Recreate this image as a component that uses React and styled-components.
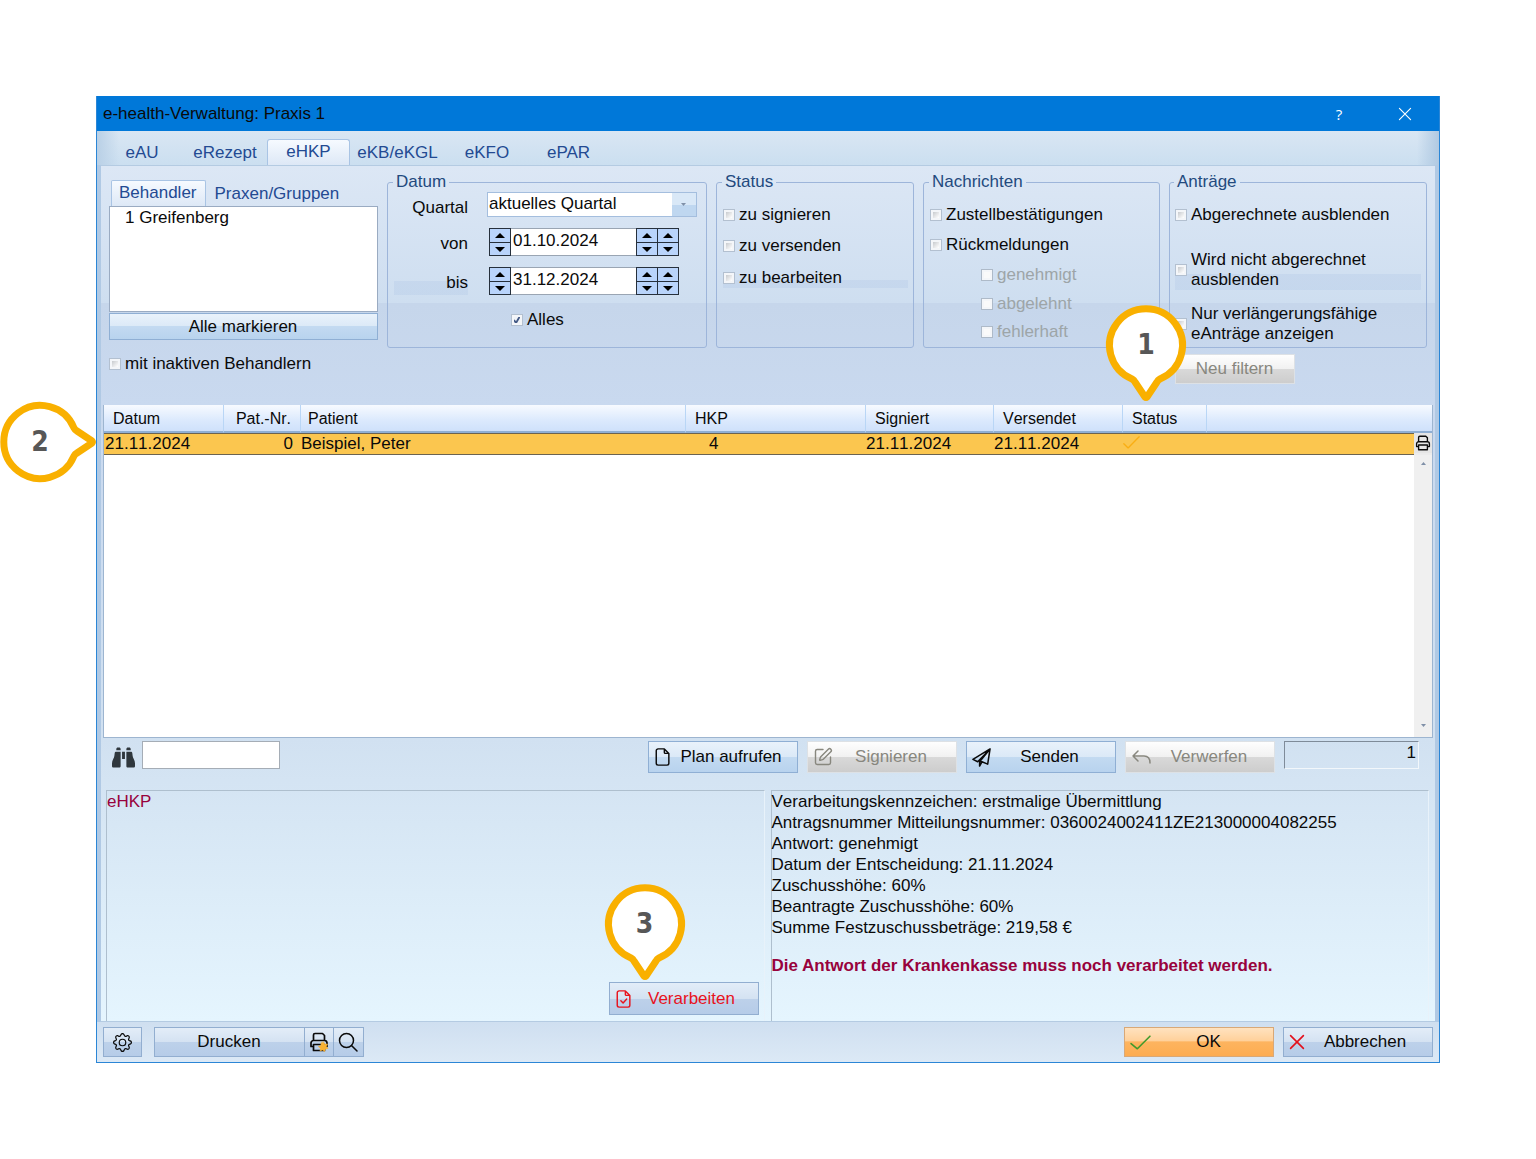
import React, { useState } from 'react';
import styled, { createGlobalStyle, css } from 'styled-components';
import { FaBinoculars } from 'react-icons/fa6';
import { BsGear } from 'react-icons/bs';
import { SquarePen } from 'lucide-react';

const GlobalStyle = createGlobalStyle`
  * {
    box-sizing: border-box;
  }
  body {
    margin: 0;
    background: #fff;
    color: #0a0a0a;
    font-family: 'Liberation Sans', Arial, sans-serif;
    font-size: 17px;
    line-height: 20px;
  }
  button, input, select {
    font: inherit;
    color: inherit;
    margin: 0;
    padding: 0;
  }
`;

const Page = styled.main`
  padding: 96px;
`;

const Window = styled.section`
  display: flex;
  flex-direction: column;
  min-width: 1240px;
  border: 1px solid #2b86d6;
  border-top: 0;
  background: #d3e3f2;
`;

const TitleBar = styled.header`
  display: flex;
  align-items: center;
  height: 35px;
  padding: 0 24px 0 6px;
  background: #0078d9;

  h1 {
    flex: 1;
    margin: 0;
    font-size: 17px;
    font-weight: 400;
  }
`;

const TitleButton = styled.button`
  display: flex;
  align-items: center;
  justify-content: center;
  width: 20px;
  height: 24px;
  margin-left: 46px;
  border: 0;
  background: none;
  color: #fff;
  font-family: 'Open Sans', sans-serif;
  font-size: 15px;
`;

const Tabs = styled.nav`
  display: flex;
  align-items: flex-end;
  height: 34px;
  padding-left: 4px;
  background: linear-gradient(90deg, #b9d0e6 0, rgba(185, 208, 230, 0) 22px calc(100% - 22px), #b0c9e2 100%),
    linear-gradient(#d9e6f3, #cbdff0);
`;

const Tab = styled.button`
  width: ${(p) => p.$width}px;
  height: 26px;
  border: 1px solid transparent;
  border-bottom: 0;
  background: none;
  color: #234a92;
  text-align: center;

  ${(p) =>
    p.$active &&
    css`
      padding-bottom: 2px;
      border-color: #a9c4e4;
      border-radius: 3px 3px 0 0;
      background: linear-gradient(#f6faff, #dde8f6);
    `}
`;

const Frame = styled.div`
  padding: 0 4px;
  background: #b0c9e4;
`;

const Panel = styled.div`
  border: 1px solid #b4cbe2;
  border-width: 1px 0;
  padding: 6px 2px 0;
  background: linear-gradient(
    #dce7f5 0,
    #cedef0 137px,
    #c6d6eb 137px,
    #c9d9ef 240px,
    #d1e1f1 67%,
    #e5f5fe 100%
  );
`;

const Filters = styled.div`
  display: grid;
  grid-template-columns: 269fr 320fr 198fr 237fr 258fr;
  gap: 6px 9px;
  padding: 0 6px;
`;

const Practitioners = styled.div`
  display: flex;
  flex-direction: column;
  padding: 8px 0;
`;

const SmallTabs = styled.div`
  display: flex;
  height: 26px;
`;

const SmallTab = styled.button`
  padding: ${(p) => (p.$active ? '0 8px 2px 7px' : '1px 8px 0')};
  margin-left: ${(p) => (p.$active ? 2 : 0)}px;
  border: 1px solid ${(p) => (p.$active ? '#a9c4e4' : 'transparent')};
  border-width: 1px 1px 0;
  border-radius: 2px 2px 0 0;
  background: ${(p) => (p.$active ? 'linear-gradient(#f6faff, #dde8f6)' : 'none')};
  color: #234a92;
`;

const NameList = styled.ul`
  flex: 1;
  margin: 0 0 1px;
  padding: 1px 15px;
  border: 1px solid #9aabc2;
  background: #fff;
  list-style: none;
`;

const tones = {
  blue: css`
    border: 1px solid #8fafd4;
    background: linear-gradient(#e9f2fb 0, #dbe9f7 50%, #c3daf1 50%, #b8d3ee 100%);
  `,
  steel: css`
    border: 1px solid #92aed0;
    background: linear-gradient(#e3edf8 0, #d4e2f2 50%, #bdd1ea 50%, #b6cce8 100%);
  `,
  grey: css`
    border: 1px solid #dde1e5;
    background: linear-gradient(#fefefe 0, #f1f1f1 50%, #d9d9d9 50%, #cdcdcd 100%);
    color: #88877e;
  `,
  orange: css`
    border: 1px solid #d8a877;
    background: linear-gradient(#ffe2bf 0, #ffd19b 45%, #fdb45f 50%, #fdac51 100%);
  `,
};

const Button = styled.button`
  display: flex;
  align-items: center;
  flex: none;
  width: ${(p) => p.$width || 150}px;
  height: ${(p) => p.$height || 32}px;
  padding: 0 6px 0 5px;
  ${(p) => tones[p.$tone || 'blue']}
  ${(p) => p.$color && `color: ${p.$color};`}

  svg {
    flex: none;
  }
  span {
    flex: 1;
    text-align: center;
  }
  svg + span {
    padding-right: 1px;
  }
`;

const MarkAll = styled(Button)`
  width: 100%;
`;

const Group = styled.fieldset`
  min-width: 0;
  height: 176px;
  margin: 0;
  padding: ${(p) => p.$pad || '13px 5px 0 6px'};
  border: 1px solid #9db5da;
  border-radius: 3px;

  legend {
    height: 20px;
    padding: 0 3px;
    margin-left: -1px;
    color: #234a7e;
  }
`;

const Check = styled.label`
  display: flex;
  align-items: center;
  gap: 4px;
  margin-top: ${(p) => p.$space || 0}px;
  margin-left: ${(p) => p.$indent || 0}px;
  color: ${(p) => (p.$muted ? '#9da5a8' : 'inherit')};
  ${(p) =>
    p.$shade && 'background: linear-gradient(transparent 60%, rgba(183, 204, 232, 0.4) 60%);'}
`;

const Box = styled.input.attrs({ type: 'checkbox' })`
  appearance: none;
  flex: none;
  width: 12px;
  height: 12px;
  border: 1px solid #b3c0d0;
  background: linear-gradient(135deg, #b4b8bd, #fcfcfc 75%);
  box-shadow: inset 0 0 0 2px #f4f6f9;

  &:disabled {
    border-color: #aebac8;
    background: #fafafa;
  }
  &:checked {
    background: url("data:image/svg+xml,%3Csvg xmlns='http://www.w3.org/2000/svg' viewBox='0 0 10 10'%3E%3Cpath d='M2 5l2 3 4-7' fill='none' stroke='%23445a86' stroke-width='1.8'/%3E%3C/svg%3E"),
      #f0f3f7;
  }
`;

const DateGrid = styled.div`
  display: grid;
  grid-template-columns: 74px 210px;
  grid-template-rows: 25px 28px 28px 20px;
  column-gap: 19px;
  row-gap: 11px;
  font-kerning: none;

  > label {
    text-align: right;
  }
`;

const FieldLabel = styled.label`
  padding-top: 6px;
  ${(p) =>
    p.$shade && 'background: linear-gradient(transparent 50%, rgba(183, 204, 232, 0.4) 50%);'}
`;

const SelectWrap = styled.div`
  display: flex;
  position: relative;
  border: 1px solid #a4bede;
  background: #fff;

  select {
    flex: 1;
    appearance: none;
    border: 0;
    padding: 0 0 2px 1px;
    background: linear-gradient(#d9e8f7 50%, #bfd7f0 50%) right / 24px 100% no-repeat;
  }
  svg {
    position: absolute;
    right: 10px;
    top: 10px;
    pointer-events: none;
  }
`;

const DateField = styled.div`
  display: flex;
  width: 190px;
  margin-left: 2px;

  input {
    flex: 1;
    min-width: 0;
    border: 1px solid #9aa5b3;
    border-width: 1px 0;
    padding: 0 2px 2px;
    background: #fff;
  }
`;

const Spin = styled.div`
  display: grid;
  grid-template-rows: 1fr 1fr;
  width: 22px;
  border: 1px solid #26303c;

  & + & {
    margin-left: -1px;
  }
  button {
    display: flex;
    align-items: center;
    justify-content: center;
    border: 0;
    background: #b9d4fb;
  }
  button + button {
    border-top: 1px solid #26303c;
  }
`;

const AllDates = styled(Check)`
  grid-column: 1 / -1;
  margin: 8px 0 0 117px;
`;

const NewFilter = styled(Button)`
  grid-column: 5;
  margin-left: 6px;
  justify-content: center;
`;

const ListBox = styled.div`
  display: flex;
  flex-direction: column;
  min-height: 333px;
  margin-top: 21px;
  border: 1px solid #9db5d0;
  border-top: 0;
  background: #fff;
`;

const Table = styled.table`
  width: 100%;
  table-layout: fixed;
  border-collapse: separate;
  border-spacing: 0;
  font-kerning: none;

  th {
    position: relative;
    height: 28px;
    padding: 2px 9px 0;
    border-left: 1px solid #b9d6f6;
    border-bottom: 2px solid #8fafd4;
    background: linear-gradient(#f7faff, #dbe9fd 60%, #cfe1fb);
    font-size: 16px;
    font-weight: 400;
    text-align: left;
  }
  th:first-child {
    border-left: 0;
  }
  th:nth-child(3) {
    padding-left: 7px;
  }
  td {
    position: relative;
    height: 22px;
    padding: 0 1px;
    border-bottom: 1px solid #6b6350;
    border-top: 1px solid #6b6350;
    background: #fbc64f;
  }
  td > svg {
    display: block;
  }
  .right {
    text-align: right;
  }
  td.right {
    padding-right: 7px;
  }
  td.plan {
    padding-left: 24px;
  }
  td.print {
    padding: 0;
    border: 0;
    background: #ececec;
    vertical-align: top;
  }
`;

const RowPrint = styled.button`
  display: flex;
  align-items: center;
  justify-content: center;
  width: 100%;
  height: 20px;
  border: 0;
  background: #e6e6e6;
`;

const ListBody = styled.div`
  display: flex;
  flex: 1;
  justify-content: flex-end;
`;

const ScrollBar = styled.div`
  display: flex;
  flex-direction: column;
  align-items: center;
  justify-content: space-between;
  width: 18px;
  padding: 7px 0 10px;
  background: #f0f0f0;
`;

const Toolbar = styled.div`
  display: flex;
  align-items: flex-start;
  gap: 9px;
  height: 52px;
  padding: 3px 14px 0 9px;

  > svg {
    margin-top: 5px;
  }
`;

const Search = styled.input`
  width: 138px;
  height: 28px;
  margin-left: -2px;
  margin-right: auto;
  border: 1px solid #a5adb6;
  background: #fff;
`;

const Counter = styled.output`
  width: 135px;
  height: 28px;
  padding: 1px 2px;
  border: 1px solid #f2f7fb;
  border-top-color: #7f8b99;
  border-left-color: #7f8b99;
  text-align: right;
`;

const Details = styled.div`
  display: grid;
  grid-template-columns: 1fr 1fr;
  gap: 6px;
  padding: 0 4px 0 3px;
`;

const Detail = styled.article`
  display: flex;
  flex-direction: column;
  height: 231px;
  border: 1px solid #aebfce;
  border-right-color: #e8f2fa;
  border-bottom: 0;
  line-height: 21px;

  p {
    margin: 0;
  }
`;

const Wine = styled.p`
  color: #98023c;
  font-weight: ${(p) => (p.$bold ? 700 : 400)};
`;

const Lines = styled.p`
  font-kerning: none;

  && {
    margin-bottom: 17px;
  }
`;

const ActionSpot = styled.div`
  position: relative;
  align-self: flex-end;
  margin: auto 5px 6px 0;
`;

const Footer = styled.footer`
  display: flex;
  align-items: center;
  height: 40px;
  padding: 0 6px;
  background: linear-gradient(#cfdff0, #dce9f6);

  > svg,
  button:first-child > svg:only-child {
    margin: 0 auto;
  }
  button:last-child {
    margin-left: 9px;
  }
`;

const PrintGroup = styled.div`
  display: flex;
  margin: 0 auto 0 12px;

  && button {
    margin: 0 -1px 0 0;
    justify-content: center;
  }
`;

const Marker = styled.span`
  position: absolute;
  z-index: 2;
  width: 82px;
  height: 98px;
  color: #575757;
  font-family: 'DejaVu Sans Condensed', 'DejaVu Sans', sans-serif;
  font-size: 28px;
  font-weight: 700;
  line-height: 81px;
  text-align: center;

  svg {
    position: absolute;
    left: 0;
    top: 0;
    z-index: -1;
    transform: rotate(${(p) => (p.$side ? -90 : 0)}deg);
    transform-origin: 41px 41px;
    overflow: visible;
  }
  ${(p) => p.$place}
`;

function Callout({ number, side, place }) {
  return (
    <Marker $side={side} $place={place}>
      <svg width="82" height="98" viewBox="0 0 82 98" aria-hidden="true">
        <path
          d="M27 75A36.500 36.500 0 1 1 55 75Q53 76 52 78L42 93Q41 94 40 93L30 78Q29 76 27 75Z"
          fill="#fff"
          stroke="#f9b000"
          strokeWidth="7"
          strokeLinejoin="round"
        />
      </svg>
      {number}
    </Marker>
  );
}

const Line = ({ size = 20, color = 'currentColor', width = 1.5, children }) => (
  <svg
    width={size}
    height={size}
    viewBox="0 0 20 20"
    fill="none"
    stroke={color}
    strokeWidth={width}
    strokeLinecap="round"
    strokeLinejoin="round"
    aria-hidden="true"
  >
    {children}
  </svg>
);

const FileIcon = ({ checked }) => (
  <Line size={18} width={1.6}>
    <path d="M4.500 1h7l5 5v11a2 2 0 0 1-2 2h-10a2 2 0 0 1-2-2V3a2 2 0 0 1 2-2zM11.500 1v4a1 1 0 0 0 1 1h4" />
    {checked && <path d="M6.500 12l2.500 2.500 4-4.500" />}
  </Line>
);

const PlaneIcon = () => (
  <Line size={19} width={1.6}>
    <path d="M19 1L1 12l5 2.500L19 1l-2.500 16-6-2.500L8 19v-4.500L19 1M8 14.500l2.500 0" />
  </Line>
);

const PrinterIcon = ({ size, star }) => (
  <Line size={size} width={1.7}>
    <path d="M4.500 8.500V3a1.500 1.500 0 0 1 1.500-1.500h7.500l2 2v5M4.500 14.500H2v-3.500A2.500 2.500 0 0 1 4.500 8.500h11A2.500 2.500 0 0 1 18 11v3.500h-2.500M4.500 12.500h11v6h-11z" />
    {star && (
      <path
        d="M14.500 10l1.300 2.300 2.700-.3-1.200 2.500 1.700 2-2.700.4-.6 2.600-2.200-1.600-2.400 1.100.3-2.700-2-1.800 2.500-.8.300-2.700z"
        fill="#f9b233"
        stroke="#f9b233"
        strokeWidth="0.600"
      />
    )}
  </Line>
);

const Arrow = ({ down, small }) => (
  <svg
    width={small ? 5 : 10}
    height={small ? 3 : 5}
    viewBox="0 0 10 6"
    preserveAspectRatio="none"
    fill={small ? '#8090a8' : '#000'}
    aria-hidden="true"
  >
    <path d={down ? 'M0 0h10L5 6z' : 'M0 6h10L5 0z'} />
  </svg>
);

const Spinner = ({ name }) => (
  <Spin>
    <button aria-label={`${name} erhöhen`}>
      <Arrow />
    </button>
    <button aria-label={`${name} verringern`}>
      <Arrow down />
    </button>
  </Spin>
);

function DateInput({ id, value }) {
  return (
    <DateField>
      <Spinner name="Tag" />
      <input id={id} defaultValue={value} />
      <Spinner name="Monat" />
      <Spinner name="Jahr" />
    </DateField>
  );
}

const TABS = [
  { label: 'eAU', width: 82 },
  { label: 'eRezept', width: 84 },
  { label: 'eHKP', width: 83 },
  { label: 'eKB/eKGL', width: 95 },
  { label: 'eKFO', width: 84 },
  { label: 'ePAR', width: 79 },
];

function App() {
  const [tab, setTab] = useState('eHKP');

  return (
    <Page>
      <GlobalStyle />
      <Window>
        <TitleBar>
          <h1>e-health-Verwaltung: Praxis 1</h1>
          <TitleButton aria-label="Hilfe">?</TitleButton>
          <TitleButton aria-label="Schließen">
            <Line size={16} width={1.4}>
              <path d="M3 3l14 14M17 3L3 17" />
            </Line>
          </TitleButton>
        </TitleBar>
        <Tabs>
          {TABS.map((t) => (
            <Tab
              key={t.label}
              $width={t.width}
              $active={t.label === tab}
              onClick={() => setTab(t.label)}
            >
              {t.label}
            </Tab>
          ))}
        </Tabs>

        <Frame>
          <Panel>
            <Filters>
              <Practitioners>
                <SmallTabs>
                  <SmallTab $active>Behandler</SmallTab>
                  <SmallTab>Praxen/Gruppen</SmallTab>
                </SmallTabs>
                <NameList>
                  <li>1 Greifenberg</li>
                </NameList>
                <MarkAll $height={27}>
                  <span>Alle markieren</span>
                </MarkAll>
              </Practitioners>

              <Group $pad="0 5px 0 6px">
                <legend>Datum</legend>
                <DateGrid>
                  <FieldLabel htmlFor="quartal">Quartal</FieldLabel>
                  <SelectWrap>
                    <select id="quartal">
                      <option>aktuelles Quartal</option>
                    </select>
                    <Arrow down small />
                  </SelectWrap>
                  <FieldLabel htmlFor="von">von</FieldLabel>
                  <DateInput id="von" value="01.10.2024" />
                  <FieldLabel htmlFor="bis" $shade>
                    bis
                  </FieldLabel>
                  <DateInput id="bis" value="31.12.2024" />
                  <AllDates>
                    <Box defaultChecked />
                    Alles
                  </AllDates>
                </DateGrid>
              </Group>

              <Group>
                <legend>Status</legend>
                <Check>
                  <Box />
                  zu signieren
                </Check>
                <Check $space={11}>
                  <Box />
                  zu versenden
                </Check>
                <Check $space={12} $shade>
                  <Box />
                  zu bearbeiten
                </Check>
              </Group>

              <Group>
                <legend>Nachrichten</legend>
                <Check>
                  <Box />
                  Zustellbestätigungen
                </Check>
                <Check $space={10}>
                  <Box />
                  Rückmeldungen
                </Check>
                <Check $space={10} $indent={51} $muted>
                  <Box disabled />
                  genehmigt
                </Check>
                <Check $space={9} $indent={51} $muted>
                  <Box disabled />
                  abgelehnt
                </Check>
                <Check $space={8} $indent={51} $muted>
                  <Box disabled />
                  fehlerhaft
                </Check>
              </Group>

              <Group $pad="13px 5px 0">
                <legend>Anträge</legend>
                <Check>
                  <Box />
                  Abgerechnete ausblenden
                </Check>
                <Check $space={25} $shade>
                  <Box />
                  <span>
                    Wird nicht abgerechnet
                    <br />
                    ausblenden
                  </span>
                </Check>
                <Check $space={14}>
                  <Box />
                  <span>
                    Nur verlängerungsfähige
                    <br />
                    eAnträge anzeigen
                  </span>
                </Check>
              </Group>

              <div>
                <Check>
                  <Box />
                  mit inaktiven Behandlern
                </Check>
              </div>
              <NewFilter $tone="grey" $width={120} $height={30}>
                Neu filtern
              </NewFilter>
            </Filters>

            <ListBox>
              <Table>
                <colgroup>
                  <col style={{ width: 119 }} />
                  <col style={{ width: 77 }} />
                  <col />
                  <col style={{ width: 180 }} />
                  <col style={{ width: 128 }} />
                  <col style={{ width: 129 }} />
                  <col style={{ width: 84 }} />
                  <col style={{ width: 208 }} />
                  <col style={{ width: 18 }} />
                </colgroup>
                <thead>
                  <tr>
                    <th>Datum</th>
                    <th className="right">Pat.-Nr.</th>
                    <th>Patient</th>
                    <th>HKP</th>
                    <th>Signiert</th>
                    <th>Versendet</th>
                    <th>
                      Status
                      <Callout number={1} place="left: -18px; top: -101px;" />
                    </th>
                    <th colSpan={2} aria-label="Drucken" />
                  </tr>
                </thead>
                <tbody>
                  <tr>
                    <td>
                      21.11.2024
                      <Callout number={2} side place="left: -105px; top: -33px;" />
                    </td>
                    <td className="right">0</td>
                    <td>Beispiel, Peter</td>
                    <td className="plan">4</td>
                    <td>21.11.2024</td>
                    <td>21.11.2024</td>
                    <td>
                      <Line size={17} color="#f9ae14" width={1.6}>
                        <path d="M1 9l5 5L19 1" />
                      </Line>
                    </td>
                    <td />
                    <td className="print">
                      <RowPrint aria-label="Zeile drucken">
                        <PrinterIcon size={16} />
                      </RowPrint>
                    </td>
                  </tr>
                </tbody>
              </Table>
              <ListBody>
                <ScrollBar>
                  <Arrow small />
                  <Arrow small down />
                </ScrollBar>
              </ListBody>
            </ListBox>

            <Toolbar>
              <FaBinoculars size={23} color="#2f373d" />
              <Search aria-label="Suchen" />
              <Button>
                <FileIcon />
                <span>Plan aufrufen</span>
              </Button>
              <Button $tone="grey">
                <SquarePen size={20} strokeWidth={1.7} />
                <span>Signieren</span>
              </Button>
              <Button>
                <PlaneIcon />
                <span>Senden</span>
              </Button>
              <Button $tone="grey">
                <Line size={20}>
                  <path d="M7 4L2 9l5 5M2 9h11q6 0 6 7" />
                </Line>
                <span>Verwerfen</span>
              </Button>
              <Counter>1</Counter>
            </Toolbar>

            <Details>
              <Detail>
                <Wine>eHKP</Wine>
                <ActionSpot>
                  <Callout number={3} place="left: -5px; top: -99px;" />
                  <Button $tone="steel" $color="#e8121c" $height={33}>
                    <FileIcon checked />
                    <span>Verarbeiten</span>
                  </Button>
                </ActionSpot>
              </Detail>
              <Detail>
                <Lines>
                  Verarbeitungskennzeichen: erstmalige Übermittlung
                  <br />
                  Antragsnummer Mitteilungsnummer: 0360024002411ZE213000004082255
                  <br />
                  Antwort: genehmigt
                  <br />
                  Datum der Entscheidung: 21.11.2024
                  <br />
                  Zuschusshöhe: 60%
                  <br />
                  Beantragte Zuschusshöhe: 60%
                  <br />
                  Summe Festzuschussbeträge: 219,58 €
                </Lines>
                <Wine $bold>Die Antwort der Krankenkasse muss noch verarbeitet werden.</Wine>
              </Detail>
            </Details>
          </Panel>
        </Frame>

        <Footer>
          <Button $tone="steel" $width={39} $height={30} aria-label="Einstellungen">
            <BsGear size={19} />
          </Button>
          <PrintGroup>
            <Button $tone="steel" $width={151} $height={30}>
              <span>Drucken</span>
            </Button>
            <Button $tone="steel" $width={30} $height={30} aria-label="Druckoptionen">
              <PrinterIcon size={20} star />
            </Button>
            <Button $tone="steel" $width={31} $height={30} aria-label="Vorschau">
              <Line size={20}>
                <circle cx="8.500" cy="8.500" r="7" />
                <path d="M13.500 13.500l5.500 5.500" />
              </Line>
            </Button>
          </PrintGroup>
          <Button $tone="orange" $height={30}>
            <Line size={21} color="#3f9a2c">
              <path d="M1 11l6 5L19 4" />
            </Line>
            <span>OK</span>
          </Button>
          <Button $tone="steel" $height={30}>
            <Line size={16} color="#e3101c" width={2}>
              <path d="M2 2l16 16M18 2L2 18" />
            </Line>
            <span>Abbrechen</span>
          </Button>
        </Footer>
      </Window>
    </Page>
  );
}

export default App;
